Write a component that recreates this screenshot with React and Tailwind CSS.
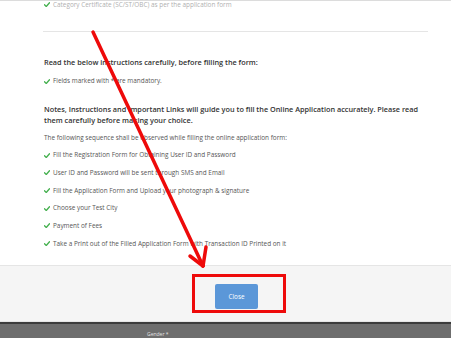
import React from 'react';

const Check = () => (
  <svg width="6" height="5" viewBox="0 0 12 10" className="shrink-0">
    <path d="M1 5.5 L4.5 9 L11 1.5" fill="none" stroke="#45b04f" strokeWidth="2.6" strokeLinecap="round" strokeLinejoin="round" />
  </svg>
);

const Item = ({ children }) => (
  <div className="flex items-center gap-[3px] h-[10px] leading-[10px] text-[6.4px] text-[#555]">
    <Check />
    <span className="whitespace-nowrap">{children}</span>
  </div>
);

const steps = [
  'Fill the Registration Form for Obtaining User ID and Password',
  'User ID and Password will be sent through SMS and Email',
  'Fill the Application Form and Upload your photograph & signature',
  'Choose your Test City',
  'Payment of Fees',
  'Take a Print out of the Filled Application Form with Transaction ID Printed on it',
];

export default function App() {
  return (
    <div className="relative w-[451px] h-[338px] overflow-hidden bg-white" style={{ fontFamily: '"Open Sans", "Liberation Sans", sans-serif' }}>
      <div className="h-[1px] bg-[#dcdcdc]" />

      {/* modal body */}
      <div className="h-[264px] pl-[44px] pr-[23px]">
        <div className="flex items-center gap-[3px] h-[7px] text-[6.4px] text-[#b0b0b0]">
          <Check />
          <span className="whitespace-nowrap">Category Certificate (SC/ST/OBC) as per the application form</span>
        </div>

        <div className="mt-[23px] -ml-[1px] border-t border-[#e5e5e5]" />

        <p className="mt-[25px] leading-[10px] text-[7.3px] font-semibold text-[#333]">
          Read the below instructions carefully, before filling the form:
        </p>
        <div className="mt-[9px]">
          <Item>Fields marked with * are mandatory.</Item>
        </div>

        <p className="mt-[18px] leading-[10.6px] text-[7.3px] font-semibold text-[#333]">
          Notes, Instructions and Important Links will guide you to fill the Online Application accurately. Please read them carefully before making your choice.
        </p>
        <p className="mt-[8px] leading-[10px] text-[6.4px] text-[#555] whitespace-nowrap">
          The following sequence shall be observed while filling the online application form:
        </p>
        <div className="mt-[7px] flex flex-col gap-[7.7px]">
          {steps.map((s) => (
            <Item key={s}>{s}</Item>
          ))}
        </div>
      </div>

      {/* modal footer */}
      <div className="h-[57px] border-y border-[#e5e5e5] bg-[#f5f5f5] pl-[215px] pt-[15px]">
        <button className="w-[43px] h-[25px] rounded-[2px] bg-[#5b97d8] text-[6.4px] text-white">Close</button>
      </div>

      {/* page behind the modal */}
      <div className="h-[16px] border-t-2 border-[#3c3c3c] bg-[#6e6e6e] pl-[147px] pt-[7px] leading-[6px] text-[5px] text-[#e4e4e4]">
        Gender *
      </div>

      {/* red annotation */}
      <div className="absolute left-[192px] top-[274px] w-[94px] h-[39px] border-[3px] border-[#ee0a0a]" />
      <svg className="absolute left-0 top-0" width="451" height="338" viewBox="0 0 451 338">
        <g stroke="#ee0a0a" strokeWidth="3.5" strokeLinecap="round" fill="none">
          <line x1="93" y1="32" x2="203" y2="266" />
          <line x1="203" y1="266" x2="206" y2="247" />
          <line x1="203" y1="266" x2="190" y2="256" />
        </g>
      </svg>
    </div>
  );
}
